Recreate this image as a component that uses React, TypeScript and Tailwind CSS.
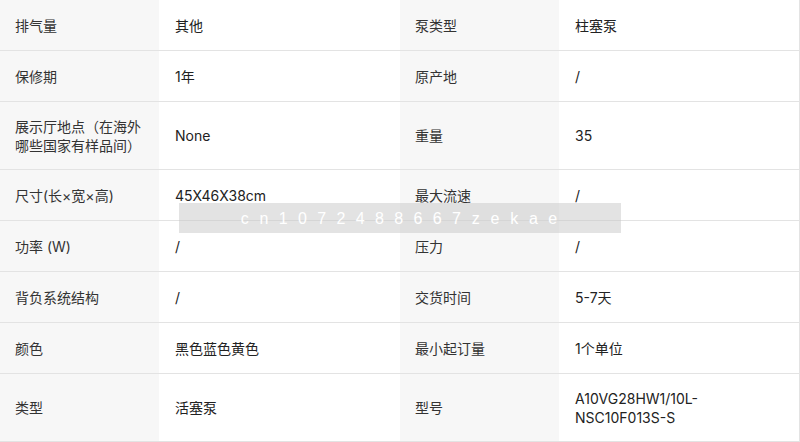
import React from "react";

type Row = [string, string, string, string];

const rows: Row[] = [
  ["排气量", "其他", "泵类型", "柱塞泵"],
  ["保修期", "1年", "原产地", "/"],
  ["展示厅地点（在海外哪些国家有样品间）", "None", "重量", "35"],
  ["尺寸(长×宽×高)", "45X46X38cm", "最大流速", "/"],
  ["功率 (W)", "/", "压力", "/"],
  ["背负系统结构", "/", "交货时间", "5-7天"],
  ["颜色", "黑色蓝色黄色", "最小起订量", "1个单位"],
  ["类型", "活塞泵", "型号", "A10VG28HW1/10L-NSC10F013S-S"],
];

const wm = "cn1072488667zekae".split("");

export default function App() {
  return (
    <div
      className="relative w-[800px] h-[442px] overflow-hidden bg-white text-[14px] leading-[19px] text-[#333]"
      style={{ fontFamily: 'Inter, "Noto Sans CJK SC", sans-serif' }}
    >
      <div className="border-r border-[#e3e3e3]">
        {rows.map((r, i) => (
          <div
            key={i}
            className="grid grid-cols-[159px_241px_159px_240px] border-b border-[#e3e3e3]"
          >
            <div className="flex items-center min-h-[50px] py-[14.5px] pl-[15px] pr-2 bg-[#f7f7f7]">
              {r[0]}
            </div>
            <div className="flex items-center min-h-[50px] py-[14.5px] pl-[16px] pr-4 text-[#222] break-words">
              {r[1]}
            </div>
            <div className="flex items-center min-h-[50px] py-[14.5px] pl-[15px] pr-2 bg-[#f7f7f7]">
              {r[2]}
            </div>
            <div className="flex items-center min-h-[50px] py-[14.5px] pl-[16px] pr-4 text-[#222]">
              {r[3]}
            </div>
          </div>
        ))}
      </div>
      <div className="absolute left-[179px] top-[203px] w-[442px] h-[30px] bg-[rgba(200,200,200,0.5)] flex items-center pl-[56px]">
        {wm.map((c, i) => (
          <span
            key={i}
            className="w-[19.25px] text-center text-white text-[16px]"
            style={{ fontFamily: '"Liberation Sans", sans-serif' }}
          >
            {c}
          </span>
        ))}
      </div>
    </div>
  );
}
